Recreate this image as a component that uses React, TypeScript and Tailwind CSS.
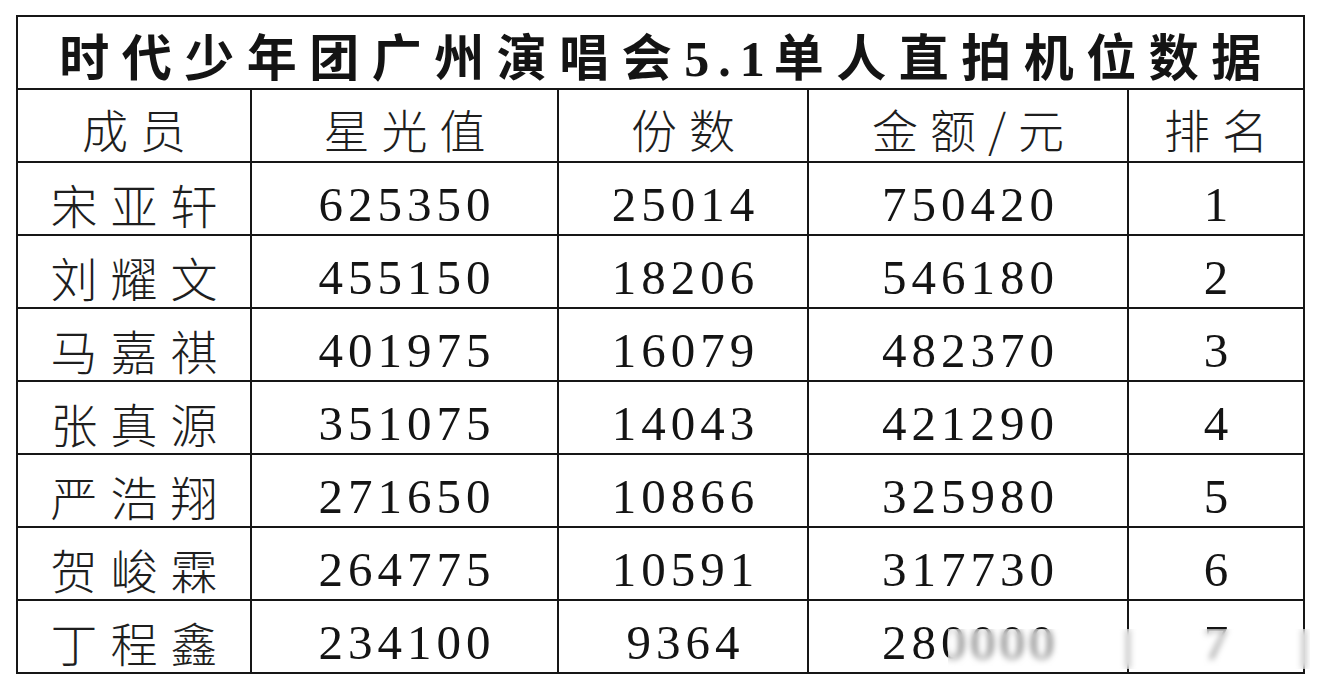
import * as React from "react";

const rows = [
  ["宋亚轩", "625350", "25014", "750420", "1"],
  ["刘耀文", "455150", "18206", "546180", "2"],
  ["马嘉祺", "401975", "16079", "482370", "3"],
  ["张真源", "351075", "14043", "421290", "4"],
  ["严浩翔", "271650", "10866", "325980", "5"],
  ["贺峻霖", "264775", "10591", "317730", "6"],
  ["丁程鑫", "234100", "9364", "280000", "7"],
];

const headers = ["成员", "星光值", "份数", "金额/元", "排名"];

const cjk = "font-['Noto_Sans_CJK_SC',sans-serif]";
const num = "font-['Liberation_Serif',serif]";
const cell = "border-2 border-[#161616] text-center align-middle p-0";

export default function App() {
  return (
    <div className="w-[1320px] h-[682px] bg-white pt-[15px] pl-[16px] text-[#141414]">
      <div className="relative w-[1287px]">
        <table className="w-[1287px] table-fixed border-collapse">
          <colgroup>
            <col className="w-[234px]" />
            <col className="w-[307px]" />
            <col className="w-[250px]" />
            <col className="w-[320px]" />
            <col className="w-[176px]" />
          </colgroup>
          <tbody>
            <tr className="h-[73px]">
              <td colSpan={5} className={cell}>
                <div
                  className={`${cjk} pt-[8px] pl-[12px] text-[50px] leading-none font-bold tracking-[12.5px]`}
                >
                  时代少年团广州演唱会
                  <span className={`${num} font-bold tracking-[9px]`}>5.1</span>
                  单人直拍机位数据
                </div>
              </td>
            </tr>
            <tr className="h-[73px]">
              {headers.map((h) => (
                <td key={h} className={cell}>
                  <div
                    className={`${cjk} pt-[4px] pl-[12px] text-[46px] leading-none font-light tracking-[12px] text-[#1e1e1e]`}
                  >
                    {h}
                  </div>
                </td>
              ))}
            </tr>
            {rows.map((r) => (
              <tr key={r[0]} className="h-[73px]">
                <td className={cell}>
                  <div
                    className={`${cjk} pt-[10px] pl-[13px] text-[47px] leading-none font-light tracking-[13px] text-[#1e1e1e]`}
                  >
                    {r[0]}
                  </div>
                </td>
                {r.slice(1).map((v, i) => (
                  <td key={i} className={cell}>
                    <div
                      className={`${num} pt-[12px] pl-[5px] text-[49px] leading-none tracking-[5px]`}
                    >
                      {v}
                    </div>
                  </td>
                ))}
              </tr>
            ))}
          </tbody>
        </table>
        {/* blurred watermark strip */}
        <div className="absolute left-[932px] top-[614px] w-[362px] h-[40px] backdrop-blur-[3px] bg-white/40" />
      </div>
    </div>
  );
}
